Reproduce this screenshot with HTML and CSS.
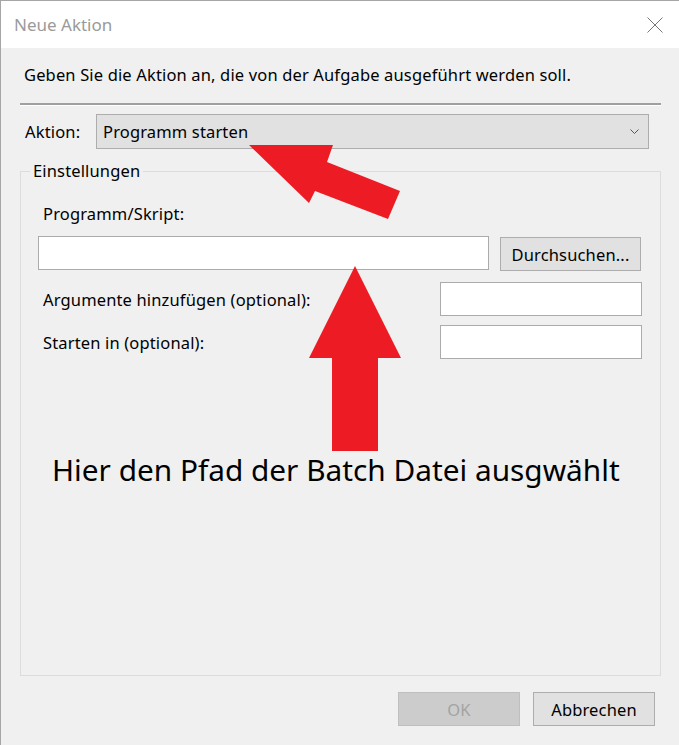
FILE: index.html
```html
<!DOCTYPE html>
<html lang="de">
<head>
  <meta charset="UTF-8">
  <meta name="viewport" content="width=device-width, initial-scale=1.0">
  <title>Neue Aktion</title>
  <link rel="stylesheet" href="styles.css">
</head>
<body>
  <div class="dialog">
    <div class="titlebar">
      <span class="title">Neue Aktion</span>
      <svg class="close" width="16" height="16" viewBox="0 0 16 16">
        <path d="M0.5 0.5 L15.5 15.5 M15.5 0.5 L0.5 15.5" />
      </svg>
    </div>

    <div class="content">
      <p class="intro">Geben Sie die Aktion an, die von der Aufgabe ausgeführt werden soll.</p>
      <div class="divider"></div>

      <div class="action-row">
        <label class="action-label" for="action">Aktion:</label>
        <div class="select" id="action">
          <span>Programm starten</span>
          <svg class="chevron" width="9" height="5" viewBox="0 0 9 5">
            <path d="M0.5 0.5 L4.5 4.5 L8.5 0.5" />
          </svg>
        </div>
      </div>

      <fieldset class="group">
        <legend>Einstellungen</legend>
        <div class="group-inner">
          <label class="field-label" for="program">Programm/Skript:</label>
          <div class="path-row">
            <input type="text" id="program" class="textbox path">
            <button type="button" class="btn browse">Durchsuchen...</button>
          </div>

          <div class="opt-row first">
            <label for="args">Argumente hinzufügen (optional):</label>
            <input type="text" id="args" class="textbox small">
          </div>

          <div class="opt-row">
            <label for="startin">Starten in (optional):</label>
            <input type="text" id="startin" class="textbox small">
          </div>

          <p class="note">Hier den Pfad der Batch Datei ausgwählt</p>
        </div>
      </fieldset>

      <div class="buttons">
        <button type="button" class="btn" disabled>OK</button>
        <button type="button" class="btn">Abbrechen</button>
      </div>
    </div>

    <!-- red hint arrows drawn over the form -->
    <svg class="arrows" width="679" height="745" viewBox="0 0 679 745">
      <polygon points="249,145 333,145 327,162 400,191 388,219 315,191 309,203" />
      <polygon points="355,266 401,358 378,358 378,451 332,451 332,358 309,358" />
    </svg>
  </div>
</body>
</html>
```

FILE: styles.css
```css
body, html {
  margin: 0;
  padding: 0;
  font-family: "Noto Sans", "Open Sans", sans-serif;
  font-size: 16.5px;
  letter-spacing: 0.15px;
  color: #000;
  background-color: #f0f0f0;
}

.dialog {
  position: relative;
  width: 679px;
  height: 745px;
  box-sizing: border-box;
  border-top: 1px solid #a6a6a6;
  border-left: 1px solid #a6a6a6;
  background-color: #f0f0f0;
  overflow: hidden;
}

.titlebar {
  height: 47px;
  background-color: #fff;
  display: flex;
  align-items: center;
  justify-content: space-between;
}

.title {
  padding-left: 13px;
  font-size: 17px;
  letter-spacing: 0;
  line-height: 47px;
  color: #9a9a9a;
}

.close {
  margin-right: 16px;
}

.close path {
  stroke: #777;
  stroke-width: 1;
  fill: none;
}

.content {
  padding: 0 18px 0 19px;
}

.intro {
  margin: 17px 0 0 4px;
  line-height: 20px;
}

.divider {
  margin-top: 18px;
  height: 2px;
  background-color: #a0a0a0;
  border-bottom: 1px solid #fff;
}

.action-row {
  margin-top: 8px;
  display: flex;
  align-items: center;
}

.action-label {
  margin-left: 5px;
  width: 71px;
}

.select {
  width: 553px;
  height: 35px;
  box-sizing: border-box;
  border: 1px solid #adadad;
  background-color: #e1e1e1;
  padding: 0 9px 0 6px;
  display: flex;
  align-items: center;
  justify-content: space-between;
}

.chevron path {
  stroke: #555;
  stroke-width: 1;
  fill: none;
}

.group {
  margin: 12px 0 0 0;
  padding: 0 18px 0 9px;
  min-inline-size: 0;
  height: 515px;
  box-sizing: border-box;
  border: 1px solid #dcdcdc;
}

.group legend {
  padding: 0 3px;
  line-height: 20px;
}

.group-inner {
  padding-left: 8px;
}

.field-label {
  display: block;
  margin: 23px 0 0 5px;
  line-height: 20px;
}

.textbox {
  height: 34px;
  box-sizing: border-box;
  border: 1px solid #ababab;
  background-color: #fff;
  margin: 0;
  padding: 0 4px;
  font: inherit;
}

.path-row {
  margin-top: 12px;
  display: flex;
  align-items: flex-start;
}

.path {
  width: 451px;
}

.btn {
  width: 122px;
  height: 34px;
  box-sizing: border-box;
  border: 1px solid #adadad;
  background-color: #e1e1e1;
  font: inherit;
  letter-spacing: inherit;
  color: #000;
  padding: 0;
}

.btn:disabled {
  background-color: #cccccc;
  border-color: #bfbfbf;
  color: #a3a3a3;
}

.browse {
  width: 141px;
  margin: 1px 0 0 11px;
}

.opt-row {
  margin-top: 9px;
  display: flex;
  align-items: center;
  justify-content: space-between;
}

.opt-row.first {
  margin-top: 11px;
}

.opt-row label {
  margin-left: 5px;
}

.small {
  width: 202px;
}

.note {
  margin: 91px 0 0 14px;
  font-size: 29.8px;
  letter-spacing: 0;
  line-height: 40px;
}

.buttons {
  margin: 16px 6px 0 0;
  display: flex;
  justify-content: flex-end;
  gap: 13px;
}

.arrows {
  position: absolute;
  top: -1px;
  left: -1px;
  pointer-events: none;
}

.arrows polygon {
  fill: #ed1c24;
}
```
